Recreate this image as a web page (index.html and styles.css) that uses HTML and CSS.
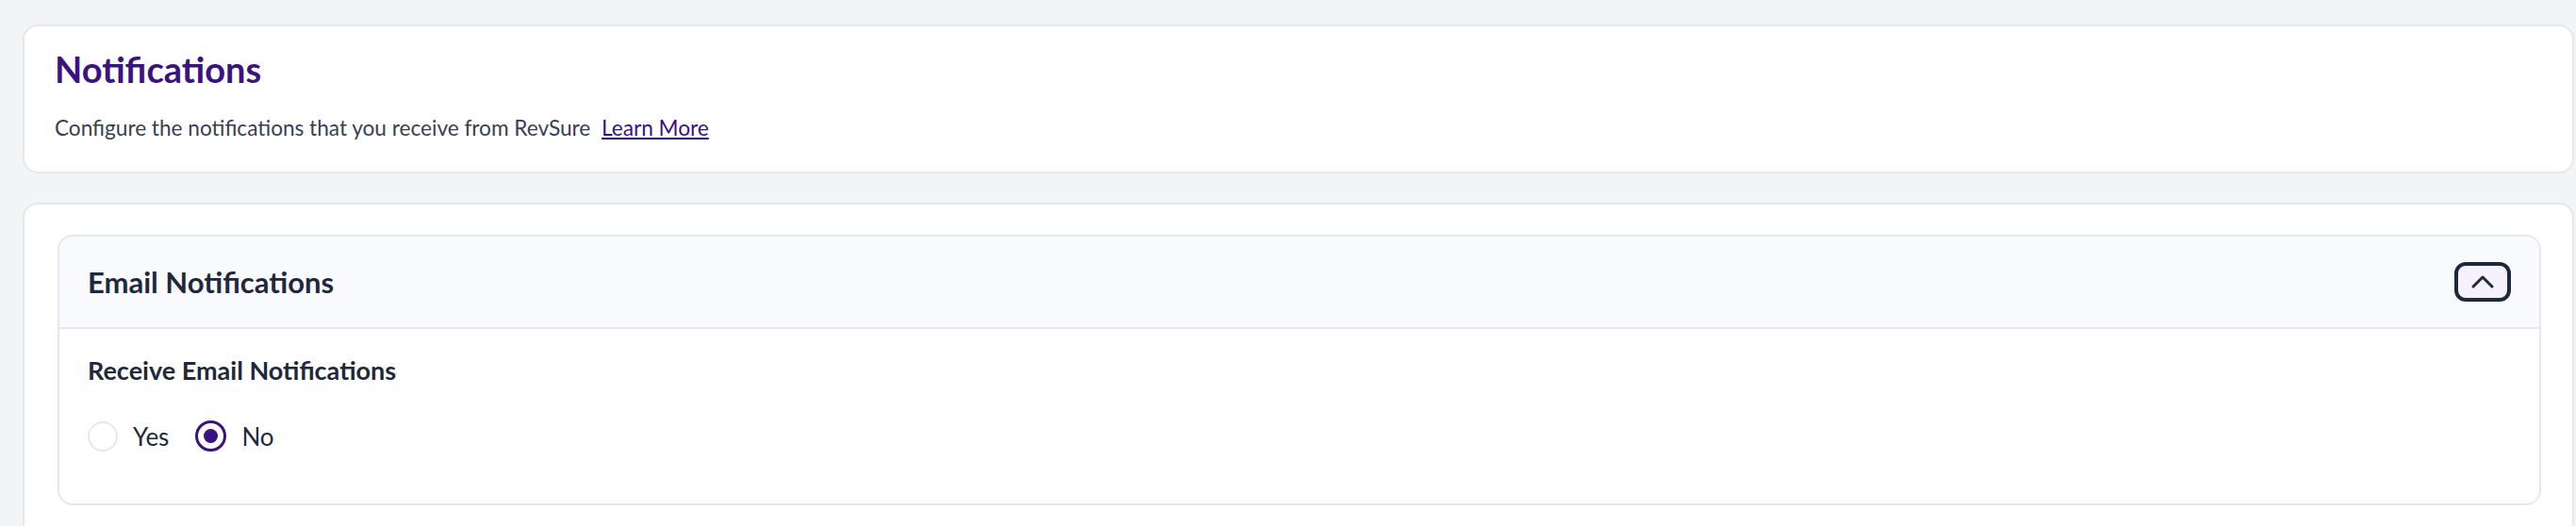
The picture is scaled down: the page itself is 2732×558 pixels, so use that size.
FILE: index.html
```html
<!DOCTYPE html>
<html lang="en">
<head>
    <meta charset="UTF-8">
    <title>Notifications</title>
    <link rel="stylesheet" href="styles.css">
</head>
<body>
    <div class="page">
        <div class="card intro">
            <h1>Notifications</h1>
            <p class="lead">Configure the notifications that you receive from RevSure <a href="#" class="learn">Learn More</a></p>
        </div>

        <div class="card settings">
            <div class="panel">
                <div class="panel-head">
                    <h2>Email Notifications</h2>
                    <button class="toggle" aria-label="Collapse">
                        <svg width="26" height="16" viewBox="0 0 26 16" fill="none">
                            <path d="M3 13 L13 3 L23 13" stroke="#1e293b" stroke-width="3" stroke-linecap="round" stroke-linejoin="round"/>
                        </svg>
                    </button>
                </div>
                <div class="panel-body">
                    <h3>Receive Email Notifications</h3>
                    <div class="choices">
                        <label class="choice"><span class="radio"></span>Yes</label>
                        <label class="choice"><span class="radio on"></span>No</label>
                    </div>
                </div>
            </div>
        </div>
    </div>
</body>
</html>
```

FILE: styles.css
```css
body {
    margin: 0;
    background-color: #f3f4f6;
    font-family: Lato, "Open Sans", sans-serif;
    color: #1e293b;
    overflow: hidden;
}
.page {
    padding: 26px 2px 0 24px;
    display: flex;
    flex-direction: column;
    gap: 31px;
}
.card {
    background-color: #fff;
    border: 2px solid #e5e7eb;
    border-radius: 16px;
}
.intro {
    padding: 21px 32px 33px 32px;
}
h1 {
    margin: 0;
    font-size: 38px;
    font-weight: 700;
    color: #3b1283;
    line-height: 48px;
}
.lead {
    margin: 25px 0 0 0;
    font-size: 22.6px;
    color: #374151;
}
.learn {
    color: #3b1283;
    margin-left: 6px;
}
.settings {
    padding: 32px 33px 80px 35px;
}
.panel {
    border: 2px solid #e5e7eb;
    border-radius: 16px;
}
.panel-head {
    background-color: #f9fafe;
    border-bottom: 2px solid #e5e7eb;
    border-radius: 14px 14px 0 0;
    height: 96px;
    padding: 0 30px 0 30px;
    display: flex;
    align-items: center;
    justify-content: space-between;
}
h2 {
    margin: 0;
    font-size: 31px;
    font-weight: 700;
}
.toggle {
    width: 60px;
    height: 42px;
    border: 4px solid #1e293b;
    border-radius: 12px;
    background-color: #f6f1fd;
    display: flex;
    align-items: center;
    justify-content: center;
    padding: 0;
}
.panel-body {
    padding: 27px 30px 55px 30px;
}
h3 {
    margin: 0;
    font-size: 27px;
    font-weight: 700;
}
.choices {
    margin-top: 37px;
    display: flex;
    gap: 28px;
}
.choice {
    display: flex;
    align-items: center;
    gap: 16px;
    font-size: 26px;
}
.radio {
    width: 28px;
    height: 28px;
    border: 2px solid #e5e7eb;
    border-radius: 50%;
    display: flex;
    align-items: center;
    justify-content: center;
}
.radio.on {
    border: 3px solid #3b1283;
    width: 27px;
    height: 27px;
}
.radio.on::after {
    content: "";
    width: 15px;
    height: 15px;
    border-radius: 50%;
    background-color: #3b1283;
}
```
